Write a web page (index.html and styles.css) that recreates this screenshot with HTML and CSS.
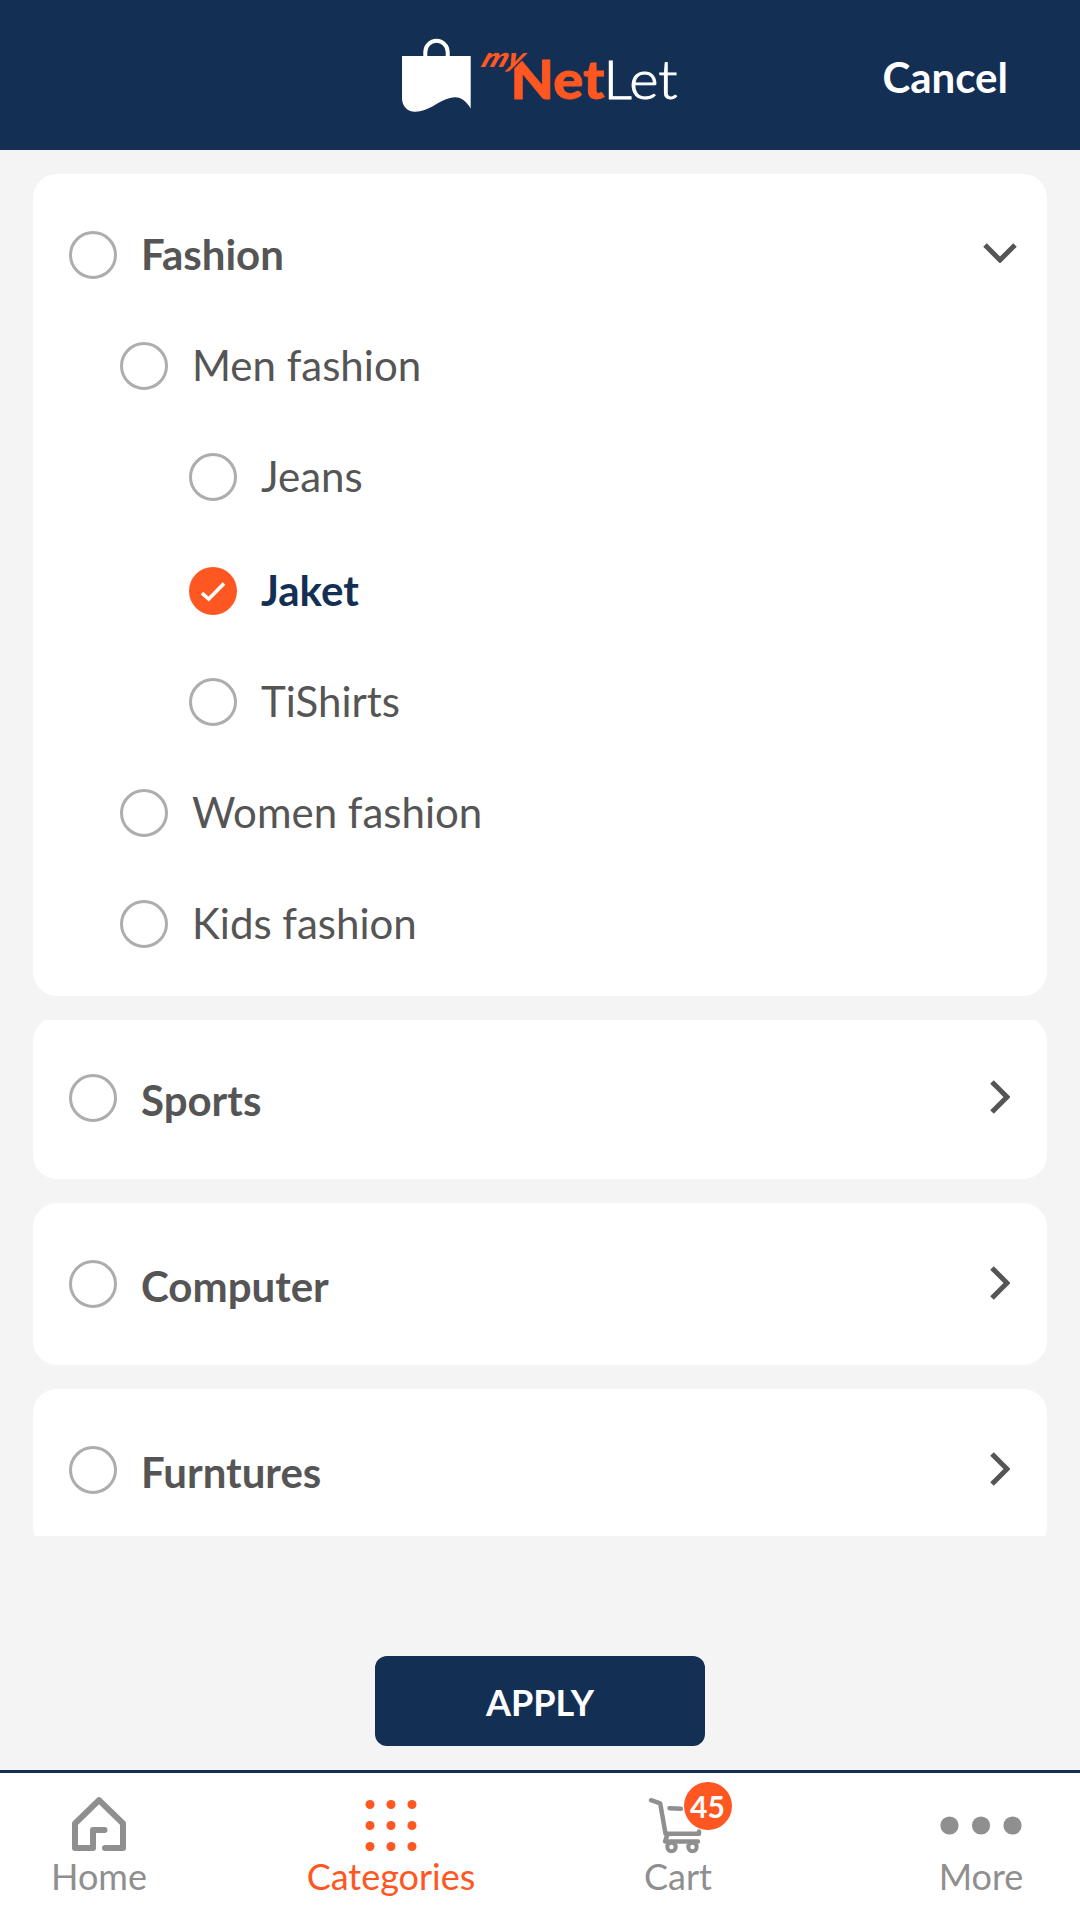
FILE: index.html
```html
<!DOCTYPE html>
<html lang="en">
<head>
<meta charset="utf-8">
<title>myNetLet - Categories</title>
<link rel="stylesheet" href="styles.css">
</head>
<body>
<header class="header">
  <svg class="logo" width="280" height="80" viewBox="400 35 280 80" role="img" aria-label="myNetLet">
    <path class="bag-handle" d="M425.3 57V52A11.2 11.2 0 0 1 447.7 52V57"/>
    <path class="bag" d="M402 56H470.7V108.5C464 98 458 96 450 98C437 101.500 429 111.700 415 111.700C407 111.700 402 106 402 98Z"/>
    <text class="logo-net" x="510.500" y="99.400" textLength="94" lengthAdjust="spacingAndGlyphs">Net</text>
    <text class="logo-let" x="603.500" y="99.400" textLength="74" lengthAdjust="spacingAndGlyphs">Let</text>
    <text class="logo-my" transform="translate(480 66.500) skewX(-22)" x="0" y="0" textLength="41" lengthAdjust="spacingAndGlyphs">my</text>
  </svg>
  <a class="cancel">Cancel</a>
</header>

<main class="categories">
  <section class="card card-open">
    <div class="row row-title"><span class="radio"></span><span class="label">Fashion</span>
      <svg class="chevron-down" width="34" height="20" viewBox="0 0 34 20"><path d="M2 2L17 17L32 2"/></svg></div>
    <div class="row row-sub"><span class="radio"></span><span class="label">Men fashion</span></div>
    <div class="row row-leaf"><span class="radio"></span><span class="label">Jeans</span></div>
    <div class="row row-leaf row-selected">
      <span class="radio radio-checked"><svg width="48" height="48" viewBox="0 0 48 48"><path d="M13 26.200L19.700 32L35 16.500"/></svg></span>
      <span class="label">Jaket</span></div>
    <div class="row row-leaf"><span class="radio"></span><span class="label">TiShirts</span></div>
    <div class="row row-sub"><span class="radio"></span><span class="label">Women fashion</span></div>
    <div class="row row-sub"><span class="radio"></span><span class="label">Kids fashion</span></div>
  </section>
  <section class="card card-closed card-tucked">
    <div class="row row-title"><span class="radio"></span><span class="label">Sports</span>
      <svg class="chevron-right" width="20" height="34" viewBox="0 0 20 34"><path d="M2 2L17 17L2 32"/></svg></div>
  </section>
  <section class="card card-closed">
    <div class="row row-title"><span class="radio"></span><span class="label">Computer</span>
      <svg class="chevron-right" width="20" height="34" viewBox="0 0 20 34"><path d="M2 2L17 17L2 32"/></svg></div>
  </section>
  <section class="card card-closed">
    <div class="row row-title"><span class="radio"></span><span class="label">Furntures</span>
      <svg class="chevron-right" width="20" height="34" viewBox="0 0 20 34"><path d="M2 2L17 17L2 32"/></svg></div>
  </section>
</main>

<div class="actions"><button class="apply">APPLY</button></div>

<nav class="tabs">
  <a class="tab tab-home">
    <svg class="tab-icon" width="60" height="60" viewBox="0 0 60 60"><path class="line" d="M36 54H54V29.500L30 6.200L6 29.500V54H24V36H35.500"/></svg>
    <span>Home</span>
  </a>
  <a class="tab tab-categories">
    <svg class="tab-icon" width="60" height="60" viewBox="0 0 60 60"><g fill="currentColor"><circle cx="9" cy="10.500" r="4.500"/><circle cx="30" cy="10.500" r="4.500"/><circle cx="51" cy="10.500" r="4.500"/><circle cx="9" cy="31.500" r="4.500"/><circle cx="30" cy="31.500" r="4.500"/><circle cx="51" cy="31.500" r="4.500"/><circle cx="9" cy="52.500" r="4.500"/><circle cx="30" cy="52.500" r="4.500"/><circle cx="51" cy="52.500" r="4.500"/></g></svg>
    <span>Categories</span>
  </a>
  <a class="tab tab-cart">
    <span class="cart-holder">
      <svg class="tab-icon" width="60" height="60" viewBox="0 0 60 60"><path class="line cart-line" d="M3 6.200L12.200 9.300L17.500 39.700H51V37.500M21.500 14.200L33 14.800M19.500 40.500L17 47.500H50"/><circle class="line cart-wheel" cx="23.500" cy="53" r="4.200"/><circle class="line cart-wheel" cx="44.500" cy="53" r="4.200"/></svg>
      <span class="badge">45</span>
    </span>
    <span>Cart</span>
  </a>
  <a class="tab tab-more">
    <svg class="tab-icon" width="84" height="60" viewBox="0 0 84 60"><g fill="currentColor"><circle cx="10.500" cy="31.500" r="9.100"/><circle cx="42" cy="31.500" r="9.100"/><circle cx="73.500" cy="31.500" r="9.100"/></g></svg>
    <span>More</span>
  </a>
</nav>
</body>
</html>
```
FILE: styles.css
```css
* { box-sizing: border-box; }
body {
  margin: 0;
  width: 1080px;
  height: 1920px;
  display: flex;
  flex-direction: column;
  overflow: hidden;
  background: #f4f4f4;
  color: #555;
  font-family: Lato, sans-serif;
  font-size: 42px;
}

/* Header */
.header {
  height: 150px;
  padding: 35px 72px 0 400px;
  display: flex;
  justify-content: space-between;
  align-items: flex-start;
  background: #142f54;
}
.logo { display: block; }
.bag { fill: #fff; }
.bag-handle { fill: none; stroke: #fff; stroke-width: 4; }
.logo-net { font: 900 53px Lato, sans-serif; fill: #ff5722; stroke: #ff5722; stroke-width: .8; }
.logo-let { font: 300 53px Lato, sans-serif; fill: #fff; stroke: #fff; stroke-width: 1; }
.logo-my {
  font: italic 900 27px Lato, sans-serif;
  fill: #ff5722;
  stroke: #142f54;
  stroke-width: 3;
  paint-order: stroke;
}
.cancel { margin-top: 16px; line-height: 52px; font-weight: 700; color: #fff; }

/* Category list */
.categories {
  height: 1386px;
  padding: 24px 33px 0;
  display: flex;
  flex-direction: column;
  gap: 24px;
  overflow: hidden;
}
.card {
  flex: none;
  padding: 57px 30px 0 36px;
  border-radius: 24px;
  background: #fff;
}
.card-open { height: 822px; display: flex; flex-direction: column; gap: 63px; }
.card-closed { height: 162px; }
.card-tucked { margin-top: -3px; clip-path: inset(3px 0 0); }
.row { height: 48px; display: flex; align-items: center; gap: 24px; }
.row-sub { padding-left: 51px; }
.row-leaf { padding-left: 120px; }
.row-selected { margin-top: 3px; color: #142f54; font-weight: 700; }
.row-title { font-weight: 700; }
.radio {
  flex: none;
  width: 48px;
  height: 48px;
  border: 3px solid #adadad;
  border-radius: 50%;
}
.radio-checked { border: 0; background: #ff5722; }
.radio-checked svg { display: block; fill: none; stroke: #fff; stroke-width: 3.6; }
.label { flex: 1; line-height: 48px; padding-bottom: 2px; white-space: nowrap; }
.card-closed .label { padding: 4px 0 0; }
.chevron-down, .chevron-right { flex: none; fill: none; stroke: #555; stroke-width: 5; }
.chevron-down { margin-bottom: 4px; }
.chevron-right { margin: 0 7px 3px 0; }

/* Apply button */
.actions { height: 234px; padding-top: 120px; display: flex; justify-content: center; }
.apply {
  width: 330px;
  height: 90px;
  padding: 2px 0 0;
  border: 0;
  border-radius: 12px;
  background: #142f54;
  color: #fff;
  font: 700 36px Lato, sans-serif;
}

/* Bottom tabs */
.tabs {
  height: 150px;
  padding: 21px 48px 0;
  display: flex;
  border-top: 3px solid #142f54;
  background: #fff;
  color: #8f8f8f;
  font-size: 36px;
  line-height: 44px;
}
.tab { flex: none; display: flex; flex-direction: column; align-items: center; }
.tab-icon { display: block; }
.tab-home { width: 102px; }
.tab-categories { width: 180px; margin-left: 151px; color: #ff5722; }
.tab-cart { width: 80px; margin-left: 157px; }
.tab-more { width: 102px; margin-left: 212px; }
.line { fill: none; stroke: currentColor; stroke-width: 6; stroke-linecap: round; stroke-linejoin: round; }
.cart-line { stroke-width: 4.500; }
.cart-wheel { stroke-width: 4; }
.cart-holder { position: relative; }
.badge {
  position: absolute;
  left: 35.5px;
  top: -12px;
  width: 48px;
  height: 48px;
  border-radius: 50%;
  background: #ff5722;
  color: #fff;
  font-weight: 700;
  font-size: 30px;
  line-height: 49px;
  text-align: center;
}
```
